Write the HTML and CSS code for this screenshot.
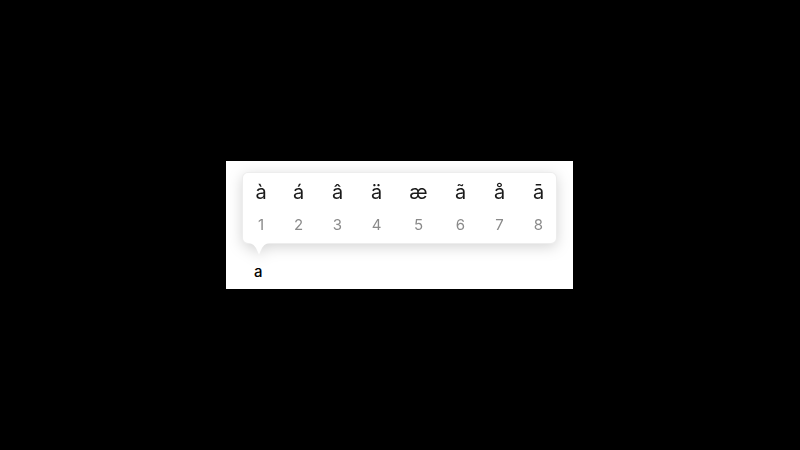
FILE: index.html
```html
<!DOCTYPE html>
<html>
<head>
<meta charset="utf-8">
<link rel="stylesheet" href="styles.css">
</head>
<body>
<div class="panel">
  <div class="popwrap">
    <div class="popup">
      <div class="col"><span class="ch">à</span><span class="num">1</span></div>
      <div class="col"><span class="ch">á</span><span class="num">2</span></div>
      <div class="col"><span class="ch">â</span><span class="num">3</span></div>
      <div class="col"><span class="ch">ä</span><span class="num">4</span></div>
      <div class="col"><span class="ch">æ</span><span class="num">5</span></div>
      <div class="col"><span class="ch">ã</span><span class="num">6</span></div>
      <div class="col"><span class="ch">å</span><span class="num">7</span></div>
      <div class="col"><span class="ch">ā</span><span class="num">8</span></div>
    </div>
    <svg class="tail" width="24" height="13" viewBox="0 0 24 13">
      <path d="M0 0 C5 0 7 2 9 5 L12 11.5 L15 5 C17 2 19 0 24 0 Z" fill="#fff"/>
    </svg>
  </div>
  <div class="typed">a</div>
</div>
</body>
</html>
```
FILE: styles.css
```css
html, body {
  margin: 0;
  padding: 0;
  background: #000;
}
body {
  width: 800px;
  height: 450px;
  box-sizing: border-box;
  padding: 161px 0 0 226px;
  font-family: "Inter", "Liberation Sans", sans-serif;
}
.panel {
  width: 347px;
  height: 128px;
  background: #fff;
  box-sizing: border-box;
  padding: 11px 16px 0 16px;
  display: flex;
  flex-direction: column;
}
.popwrap {
  position: relative;
  width: 315px;
  filter: drop-shadow(0 3px 7px rgba(0,0,0,0.17));
}
.popup {
  height: 72px;
  box-sizing: border-box;
  background: #fff;
  border-radius: 6px;
  border: 1px solid rgba(0,0,0,0.07);
  display: grid;
  grid-template-columns: 36px 39px 39px 39px 45px 39px 39px 39px;
  padding: 7px 0 0 0;
}
.col {
  display: flex;
  flex-direction: column;
  align-items: center;
}
.ch {
  font-size: 20px;
  line-height: 24px;
  color: #1a1a1a;
}
.num {
  margin-top: 11px;
  font-size: 15px;
  line-height: 20px;
  color: #8a8a8a;
}
.tail {
  position: absolute;
  left: 5px;
  top: 71px;
}
.typed {
  margin-top: 19px;
  padding-left: 12px;
  font-size: 15px;
  font-weight: 500;
  line-height: 18px;
  color: #000;
}
```
